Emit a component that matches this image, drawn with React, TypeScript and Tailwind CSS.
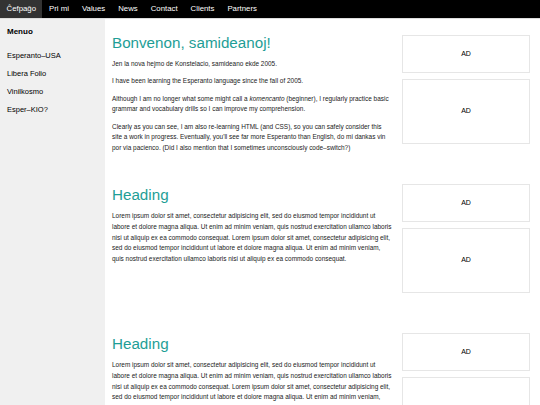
import React from 'react';

const NAV = ['Ĉefpaĝo', 'Pri mi', 'Values', 'News', 'Contact', 'Clients', 'Partners'];
const MENU = ['Esperanto–USA', 'Libera Folio', 'Vinilkosmo', 'Esper–KIO?'];

const LOREM =
  'Lorem ipsum dolor sit amet, consectetur adipisicing elit, sed do eiusmod tempor incididunt ut labore et dolore magna aliqua. Ut enim ad minim veniam, quis nostrud exercitation ullamco laboris nisi ut aliquip ex ea commodo consequat. Lorem ipsum dolor sit amet, consectetur adipisicing elit, sed do eiusmod tempor incididunt ut labore et dolore magna aliqua. Ut enim ad minim veniam, quis nostrud exercitation ullamco laboris nisi ut aliquip ex ea commodo consequat.';

function Ads() {
  return (
    <div className="w-[128px] shrink-0 flex flex-col gap-[6px] pt-[2px]">
      <div className="h-[38px] border border-[#e6e6e6] flex items-center justify-center text-[7px]">AD</div>
      <div className="h-[65px] border border-[#e6e6e6] flex items-center justify-center text-[7px]">AD</div>
    </div>
  );
}

function Section({ title, first, children }: { title: string; first?: boolean; children: React.ReactNode }) {
  return (
    <section className="flex h-[149px] gap-[9.5px]">
      <div className={`flex-1 min-w-0 ${first ? '' : 'pt-[3px]'}`}>
        <h2 className="text-[15.2px] leading-[20px] text-[#1e9e96] mb-[6px]">{title}</h2>
        <div className="text-[6.45px] leading-[10.75px] text-[#1a1a1a] space-y-[6.5px]">{children}</div>
      </div>
      <Ads />
    </section>
  );
}

export default function App() {
  return (
    <div className="w-[540px] h-[405px] overflow-hidden bg-white text-black" style={{ fontFamily: '"Liberation Sans", Arial, sans-serif' }}>
      <nav className="h-[18px] bg-black flex border-b border-[#dddddd] box-content">
        {NAV.map((n, i) => (
          <span key={n} className={`px-[6.5px] text-[7.8px] leading-[18px] text-white ${i === 0 ? 'bg-[#333333]' : ''}`}>
            {n}
          </span>
        ))}
      </nav>
      <div className="flex h-[386px]">
        <aside className="w-[105px] shrink-0 bg-[#f0f0f0] pl-[7px] pt-[7px]">
          <h3 className="text-[8px] font-bold leading-[12px] mb-[12px]">Menuo</h3>
          <ul className="space-y-[6px]">
            {MENU.map((m) => (
              <li key={m} className="text-[7.5px] leading-[12px]">{m}</li>
            ))}
          </ul>
        </aside>
        <main className="flex-1 pl-[7px] pr-[10px] pt-[14px]">
          <Section title="Bonvenon, samideanoj!" first>
            <p>Jen la nova hejmo de Konstelacio, samideano ekde 2005.</p>
            <p>I have been learning the Esperanto language since the fall of 2005.</p>
            <p>
              Although I am no longer what some might call a <em>komencanto</em> (beginner), I regularly practice basic grammar and vocabulary drills so I can improve my comprehension.
            </p>
            <p>
              Clearly as you can see, I am also re-learning HTML (and CSS), so you can safely consider this site a work in progress. Eventually, you'll see far more Esperanto than English, do mi dankas vin por via pacienco. (Did I also mention that I sometimes unconsciously code–switch?)
            </p>
          </Section>
          <Section title="Heading">
            <p>{LOREM}</p>
          </Section>
          <Section title="Heading">
            <p>{LOREM}</p>
          </Section>
        </main>
      </div>
    </div>
  );
}
